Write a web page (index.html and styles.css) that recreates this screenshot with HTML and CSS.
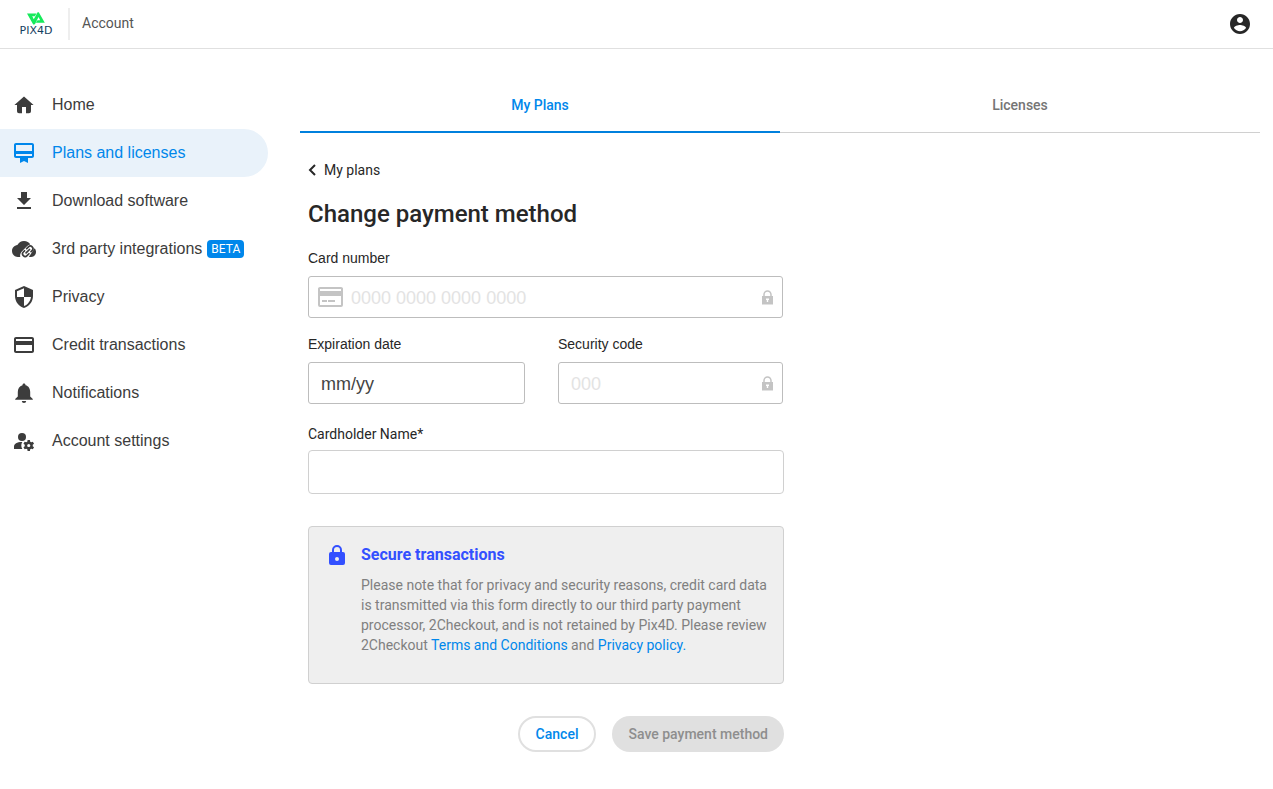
FILE: index.html
```html
<!DOCTYPE html>
<html lang="en">
<head>
<meta charset="utf-8">
<meta name="viewport" content="width=device-width, initial-scale=1">
<title>Change payment method</title>
<link rel="stylesheet" href="styles.css">
</head>
<body>
<header class="topbar">
  <a class="brand" href="#" aria-label="Pix4D home">
    <svg class="brand-mark" viewBox="0 0 18 13" aria-hidden="true"><path fill="#17ea5b" d="M0 1.500h9.500L7.800 4.200H5.200l1.600 3L10.600.3h1.200L7.300 12.500H6.200zM11.800.3 17.800 10.800H8.800l1.700-2.600h2.700l-1.700-3.200-3.700 7.500-.5-1z"/></svg>
    <span class="brand-name">PIX4D</span>
  </a>
  <span class="section-name">Account</span>
  <button class="user-button" type="button" aria-label="User menu">
    <svg viewBox="0 0 24 24"><path d="M12 2C6.480 2 2 6.480 2 12s4.480 10 10 10 10-4.480 10-10S17.520 2 12 2zm0 3c1.660 0 3 1.340 3 3s-1.340 3-3 3-3-1.340-3-3 1.340-3 3-3zm0 14.200c-2.500 0-4.710-1.280-6-3.220.03-1.990 4-3.080 6-3.080 1.990 0 5.970 1.090 6 3.080-1.290 1.940-3.500 3.220-6 3.220z"/></svg>
  </button>
</header>
<div class="shell">
  <nav class="sidebar" aria-label="Account">
    <a class="nav-item" href="#"><svg viewBox="0 0 24 24"><path d="M12 3.500 2.400 12H5v6.300a2 2 0 0 0 2 2h3V14h4v6.300h3a2 2 0 0 0 2-2V12h2.600z"/></svg>Home</a>
    <a class="nav-item active" href="#" aria-current="page"><svg viewBox="0 0 24 24"><path d="M20 2H4c-1.110 0-2 .89-2 2v11c0 1.110.89 2 2 2h4v5l4-2 4 2v-5h4c1.110 0 2-.89 2-2V4c0-1.110-.89-2-2-2zm0 13H4v-2h16v2zm0-5H4V4h16v6z"/></svg>Plans and licenses</a>
    <a class="nav-item" href="#"><svg viewBox="0 0 24 24"><path d="M19 9h-4V3H9v6H5l7 7 7-7zM5 18v2h14v-2H5z"/></svg>Download software</a>
    <a class="nav-item" href="#"><svg viewBox="0 0 24 24"><path d="M18.300 7.600C17.200 5.400 14.800 4 12 4 9.110 4 6.600 5.640 5.350 8.040 2.340 8.360 0 10.910 0 14c0 3.310 2.690 6 6 6h2.300c-.5-2 .1-4 1.500-5.600l5.200-5.200c1-.9 2-1.400 3.300-1.600z"/><g transform="translate(15.800 14.200) rotate(-45)" fill="none" stroke="currentColor" stroke-width="1.700" stroke-linecap="round"><path d="M1-2.600h2.500a2.600 2.600 0 0 1 0 5.200H2M-1 2.600h-2.700a2.600 2.600 0 0 1 0-5.200H-2M-2.400 0h4.800"/></g><path d="M22.600 11.200c.9.900 1.400 2.300 1.400 3.800 0 2.760-2.240 5-5 5h-2.200z"/></svg>3rd party integrations<span class="badge">BETA</span></a>
    <a class="nav-item" href="#"><svg viewBox="0 0 24 24"><path d="M12 1 3 5v6c0 5.550 3.840 10.740 9 12 5.160-1.260 9-6.450 9-12V5l-9-4zm0 10.990h7c-.53 4.120-3.280 7.790-7 8.940V12H5V6.300l7-3.110v8.800z"/></svg>Privacy</a>
    <a class="nav-item" href="#"><svg viewBox="0 0 24 24"><path d="M20 4H4c-1.110 0-1.990.89-1.990 2L2 18c0 1.110.89 2 2 2h16c1.110 0 2-.89 2-2V6c0-1.110-.89-2-2-2zm0 14H4v-6h16v6zm0-10H4V6h16v2z"/></svg>Credit transactions</a>
    <a class="nav-item" href="#"><svg viewBox="0 0 24 24"><path d="M12 2.500c-.9 0-1.500.6-1.500 1.500v.3C7.300 5 5.800 7.900 5.800 11v4.500L3.200 18v.8h17.600V18l-2.600-2.500V11c0-3.100-1.500-6-4.700-6.700V4c0-.9-.6-1.500-1.500-1.500zM9.800 20a2.200 2 0 0 0 4.400 0z"/></svg>Notifications</a>
    <a class="nav-item" href="#"><svg viewBox="0 0 24 24"><circle cx="10" cy="8" r="4"/><path d="M10.300 13C5 12.900 2 15.100 2 17.500V20h8.300A7 7 0 0 1 10.300 13z"/><path fill-rule="evenodd" d="M20.750 16.500c0-.22-.03-.42-.06-.63l1.340-1.110-1.200-2.030-1.550.59c-.32-.27-.68-.48-1.080-.63L17.900 11h-2.300l-.3 1.690c-.4.150-.76.360-1.080.63l-1.550-.59-1.200 2.030 1.340 1.110c-.03.21-.06.41-.06.63s.03.420.06.630l-1.340 1.110 1.200 2.030 1.550-.59c.32.270.68.480 1.080.630L15.600 22h2.300l.3-1.690c.4-.15.76-.36 1.080-.63l1.550.59 1.200-2.030-1.340-1.110c.03-.21.06-.41.06-.63zm-4 1.600a1.600 1.600 0 1 1 0-3.200 1.600 1.600 0 0 1 0 3.200z"/></svg>Account settings</a>
  </nav>
  <main class="content">
    <nav class="tabs" aria-label="Plans and licenses">
      <a class="tab selected" href="#" aria-current="page">My Plans</a>
      <a class="tab" href="#">Licenses</a>
    </nav>
    <div class="panel">
      <a class="back" href="#"><svg viewBox="0 0 8 12"><path d="M7 1 2 6l5 5"/></svg>My plans</a>
      <h1 class="title">Change payment method</h1>
      <form class="payment">
        <div class="card-fields">
          <div class="field wide">
            <label for="number">Card number</label>
            <div class="box">
              <svg class="card-icon" viewBox="0 0 25 20"><path fill-rule="evenodd" d="M2 0h21a2 2 0 0 1 2 2v16a2 2 0 0 1-2 2H2a2 2 0 0 1-2-2V2a2 2 0 0 1 2-2zm0 2v2h21V2zm0 7v9h21V9zM4 13h5v2H4zm6 0h7v2h-7z"/></svg>
              <input id="number" type="text" inputmode="numeric" placeholder="0000 0000 0000 0000">
              <svg class="lock-icon" viewBox="0 0 11 15"><path d="M2 7V4.500a3.500 3.500 0 0 1 7 0V7" fill="none" stroke="currentColor" stroke-width="1.500"/><path d="M0 6h11v8.500H0z"/><path d="M4 8.500h3v1.500h-.8V12H4.800v-2H4z" fill="#fff"/></svg>
            </div>
          </div>
          <div class="field">
            <label for="expiry">Expiration date</label>
            <div class="box"><input class="dark" id="expiry" type="text" placeholder="mm/yy"></div>
          </div>
          <div class="field">
            <label for="code">Security code</label>
            <div class="box">
              <input id="code" type="text" inputmode="numeric" placeholder="000">
              <svg class="lock-icon" viewBox="0 0 11 15"><path d="M2 7V4.500a3.500 3.500 0 0 1 7 0V7" fill="none" stroke="currentColor" stroke-width="1.500"/><path d="M0 6h11v8.500H0z"/><path d="M4 8.500h3v1.500h-.8V12H4.800v-2H4z" fill="#fff"/></svg>
            </div>
          </div>
        </div>
        <div class="holder">
          <label for="holder">Cardholder Name*</label>
          <input id="holder" type="text">
        </div>
        <section class="notice">
          <svg class="notice-icon" viewBox="0 0 16 20"><path d="M4 8V5a4 4 0 0 1 8 0v3" fill="none" stroke="currentColor" stroke-width="2"/><path fill-rule="evenodd" d="M2 7h12a2 2 0 0 1 2 2v9a2 2 0 0 1-2 2H2a2 2 0 0 1-2-2V9a2 2 0 0 1 2-2zm6 5a2 2 0 1 0 0 4 2 2 0 0 0 0-4z"/></svg>
          <div>
            <h2>Secure transactions</h2>
            <p>Please note that for privacy and security reasons, credit card data is transmitted via this form directly to our third party payment processor, 2Checkout, and is not retained by Pix4D. Please review 2Checkout <a href="#">Terms and Conditions</a> and <a href="#">Privacy policy.</a></p>
          </div>
        </section>
        <div class="actions">
          <button class="cancel" type="button">Cancel</button>
          <button class="save" type="submit" disabled>Save payment method</button>
        </div>
      </form>
    </div>
  </main>
</div>
</body>
</html>
```
FILE: styles.css
```css
* { box-sizing: border-box; }
body { margin: 0; background: #fff; color: #272727; font: 14px/20px Roboto, sans-serif; }
a { color: inherit; text-decoration: none; }
svg { flex: none; fill: currentColor; }
input, button { font: inherit; }

.topbar { display: flex; align-items: center; height: 49px; padding: 0 21px 0 17px; border-bottom: 1px solid #e0e0e0; }
.brand { display: flex; flex-direction: column; align-items: center; width: 38px; }
.brand-mark { width: 18px; height: 13px; }
.brand-name { color: #15405f; font: 11px/12px "DejaVu Sans", sans-serif; }
.section-name { display: flex; align-items: center; height: 32px; margin-left: 13px; padding: 0 0 2px 12px; border-left: 2px solid #eee; color: #555; }
.user-button { display: flex; margin-left: auto; padding: 0; border: 0; background: none; color: #272727; }
.user-button svg { width: 24px; height: 24px; }

.shell { display: flex; gap: 32px; padding: 32px 13px 32px 0; }
.sidebar { flex: none; width: 268px; }
.nav-item { display: flex; align-items: center; height: 48px; padding-left: 12px; border-radius: 0 24px 24px 0; color: #3c3c3c; font: 16px/24px "Liberation Sans", sans-serif; }
.nav-item svg { width: 24px; height: 24px; margin-right: 16px; }
.nav-item.active { background: #e9f2fa; color: #0087eb; }
.badge { margin-left: 5px; padding: 0 4px; border-radius: 4px; background: #0087eb; color: #fff; font: 12px/18px Roboto, sans-serif; }

.content { flex: 1; min-width: 0; }
.tabs { display: flex; border-bottom: 1px solid #d0d0d0; }
.tab { flex: 1; height: 51px; padding-top: 14px; color: #757575; font-weight: 500; text-align: center; }
.tab.selected { height: 52px; margin-bottom: -1px; border-bottom: 2px solid #0080dd; color: #0087eb; }
.panel { max-width: 492px; padding: 27px 8px 0; }
.back { display: flex; align-items: center; gap: 8px; }
.back svg { width: 8px; height: 12px; fill: none; stroke: currentColor; stroke-width: 2; }
.title { margin: 18px 0; font-size: 24px; font-weight: 500; line-height: 32px; }

.card-fields { display: grid; grid-template-columns: 217fr 225fr; gap: 16px 33px; margin-right: 1px; }
.wide { grid-column: 1 / -1; }
.field label { display: block; height: 28px; font-family: "Liberation Sans", sans-serif; }
.box { display: flex; align-items: center; height: 42px; padding: 0 9px 0 12px; border: 1px solid #bdbdbd; border-radius: 3px; color: #c4c4c4; }
.wide .box { padding-left: 9px; }
.box input { flex: 1; width: 0; height: 40px; padding: 2px 0 0; border: 0; outline: 0; background: none; color: #444; font: 18px "Liberation Sans", sans-serif; }
.box input::placeholder { color: #e3e3e3; opacity: 1; }
.box input.dark::placeholder { color: #444; }
.card-icon { width: 25px; height: 20px; margin-right: 8px; }
.lock-icon { width: 11px; height: 15px; }
.holder { margin-top: 20px; }
.holder label { display: block; height: 26px; }
.holder input { display: block; width: 100%; height: 44px; padding: 0 12px; border: 1px solid #d0d0d0; border-radius: 4px; }

.notice { display: flex; gap: 16px; margin-top: 32px; padding: 16px 12px 28px 20px; border: 1px solid #d0d0d0; border-radius: 4px; background: #efefef; }
.notice-icon { width: 16px; height: 20px; margin-top: 2px; color: #3350ff; }
.notice h2 { margin: 0 0 8px; color: #3350ff; font-size: 16px; font-weight: 700; line-height: 24px; }
.notice p { margin: 0; color: #808080; }
.notice a { color: #0087eb; }

.actions { display: flex; justify-content: flex-end; gap: 16px; margin-top: 32px; }
.actions button { height: 36px; padding: 0 16px; border: 0; border-radius: 18px; font-weight: 500; }
.actions .cancel { border: 2px solid #e0e0e0; background: #fff; color: #0087eb; }
.actions .save { background: #e0e0e0; color: #8e8e8e; }
```
